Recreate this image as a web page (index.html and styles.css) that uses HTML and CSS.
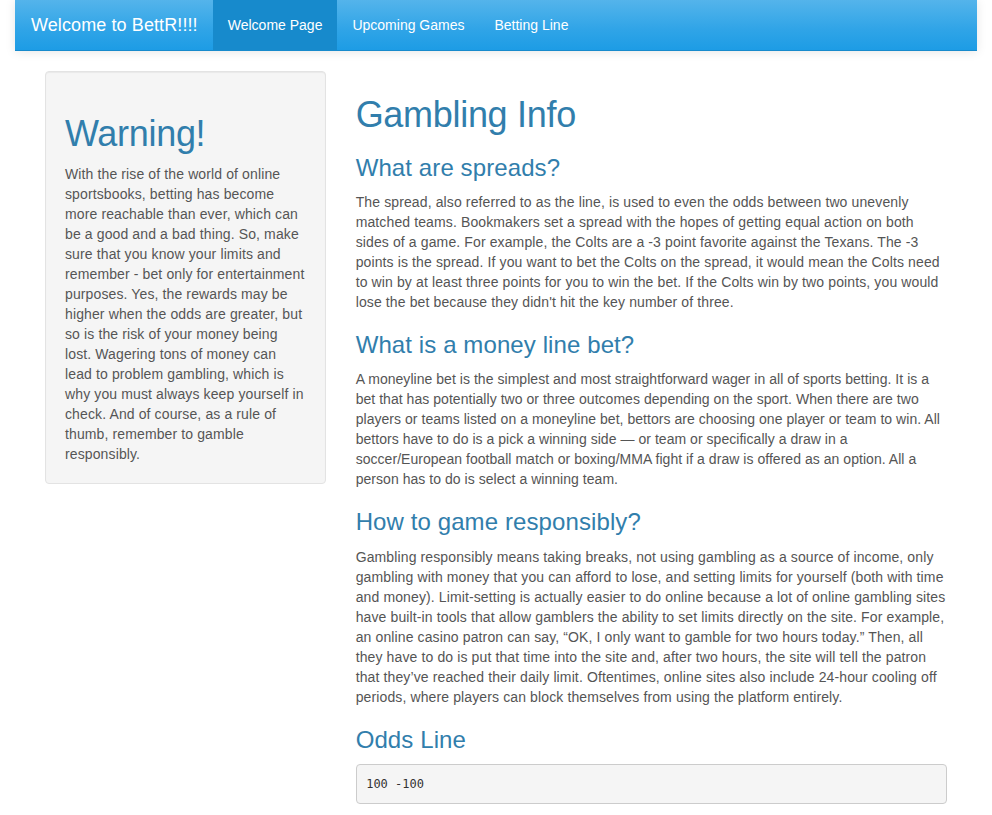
FILE: index.html
```html
<!DOCTYPE html>
<html lang="en">
<head>
<meta charset="utf-8">
<title>BettR</title>
<link rel="stylesheet" href="styles.css">
</head>
<body>
<div class="nav-wrap">
  <nav class="navbar">
    <a class="brand" href="#">Welcome to BettR!!!!</a>
    <ul class="nav">
      <li class="active"><a href="#">Welcome Page</a></li>
      <li><a href="#">Upcoming Games</a></li>
      <li><a href="#">Betting Line</a></li>
    </ul>
  </nav>
</div>
<div class="content">
  <aside class="col side">
    <div class="well">
      <h1>Warning!</h1>
      <p>With the rise of the world of online sportsbooks, betting has become more reachable than ever, which can be a good and a bad thing. So, make sure that you know your limits and remember - bet only for entertainment purposes. Yes, the rewards may be higher when the odds are greater, but so is the risk of your money being lost. Wagering tons of money can lead to problem gambling, which is why you must always keep yourself in check. And of course, as a rule of thumb, remember to gamble responsibly.</p>
    </div>
  </aside>
  <main class="col main">
    <h1>Gambling Info</h1>
    <h3>What are spreads?</h3>
    <p>The spread, also referred to as the line, is used to even the odds between two unevenly matched teams. Bookmakers set a spread with the hopes of getting equal action on both sides of a game. For example, the Colts are a -3 point favorite against the Texans. The -3 points is the spread. If you want to bet the Colts on the spread, it would mean the Colts need to win by at least three points for you to win the bet. If the Colts win by two points, you would lose the bet because they didn't hit the key number of three.</p>
    <h3>What is a money line bet?</h3>
    <p class="tight">A moneyline bet is the simplest and most straightforward wager in all of sports betting. It is a bet that has potentially two or three outcomes depending on the sport. When there are two players or teams listed on a moneyline bet, bettors are choosing one player or team to win. All bettors have to do is a pick a winning side — or team or specifically a draw in a soccer/European football match or boxing/MMA fight if a draw is offered as an option. All a person has to do is select a winning team.</p>
    <h3>How to game responsibly?</h3>
    <p>Gambling responsibly means taking breaks, not using gambling as a source of income, only gambling with money that you can afford to lose, and setting limits for yourself (both with time and money). Limit-setting is actually easier to do online because a lot of online gambling sites have built-in tools that allow gamblers the ability to set limits directly on the site. For example, an online casino patron can say, “OK, I only want to gamble for two hours today.” Then, all they have to do is put that time into the site and, after two hours, the site will tell the patron that they’ve reached their daily limit. Oftentimes, online sites also include 24-hour cooling off periods, where players can block themselves from using the platform entirely.</p>
    <h3>Odds Line</h3>
    <pre>100 -100</pre>
  </main>
</div>
</body>
</html>
```
FILE: styles.css
```css
* { box-sizing: border-box; }
html, body { margin: 0; padding: 0; }
body {
  font-family: "Liberation Sans", Arial, Helvetica, sans-serif;
  font-size: 14px;
  line-height: 20px;
  letter-spacing: 0.12px;
  color: #555555;
  background: #ffffff;
}
.nav-wrap { padding: 0 15px; }
.navbar {
  display: flex;
  align-items: stretch;
  height: 51px;
  background-image: linear-gradient(#54b4eb, #2fa4e7 60%, #1d9ce5);
  border-bottom: 1px solid #178acc;
  box-shadow: 0 1px 10px rgba(0, 0, 0, 0.1);
  margin-bottom: 20px;
}
.brand {
  display: block;
  padding: 15px 15px 15px 16px;
  font-size: 18px;
  line-height: 20px;
  letter-spacing: 0.1px;
  color: #ffffff;
  text-decoration: none;
}
.nav {
  display: flex;
  list-style: none;
  margin: 0;
  padding: 0;
}
.nav li a {
  display: block;
  padding: 15px;
  line-height: 20px;
  height: 50px;
  letter-spacing: 0;
  color: #ffffff;
  text-decoration: none;
}
.nav li.active a { background-color: #178acc; }
.content {
  display: grid;
  grid-template-columns: 1fr 2fr;
  margin: 0 30px;
}
.col { padding: 0 15px; }
h1, h3 {
  font-family: "Liberation Sans", Arial, Helvetica, sans-serif;
  font-weight: 500;
  color: #317eac;
  line-height: 1.1;
}
h1 { font-size: 36px; margin: 24px 0 10px; letter-spacing: -0.3px; }
h3 { font-size: 24px; margin: 20px 0 11px; letter-spacing: 0.1px; }
p { margin: 0 0 10px; }
p.tight { letter-spacing: 0.04px; }
.well {
  background-color: #f5f5f5;
  border: 1px solid #e3e3e3;
  border-radius: 4px;
  padding: 19px;
  margin-bottom: 20px;
  box-shadow: inset 0 1px 1px rgba(0, 0, 0, 0.05);
}
.well h1 { margin-top: 23px; }
.well p { margin: 0; }
pre {
  display: block;
  margin: 0 0 10px;
  padding: 9.5px;
  font-family: "DejaVu Sans Mono", Consolas, monospace;
  font-size: 12px;
  line-height: 19px;
  letter-spacing: 0;
  color: #333333;
  background-color: #f5f5f5;
  border: 1px solid #cccccc;
  border-radius: 4px;
}
```
